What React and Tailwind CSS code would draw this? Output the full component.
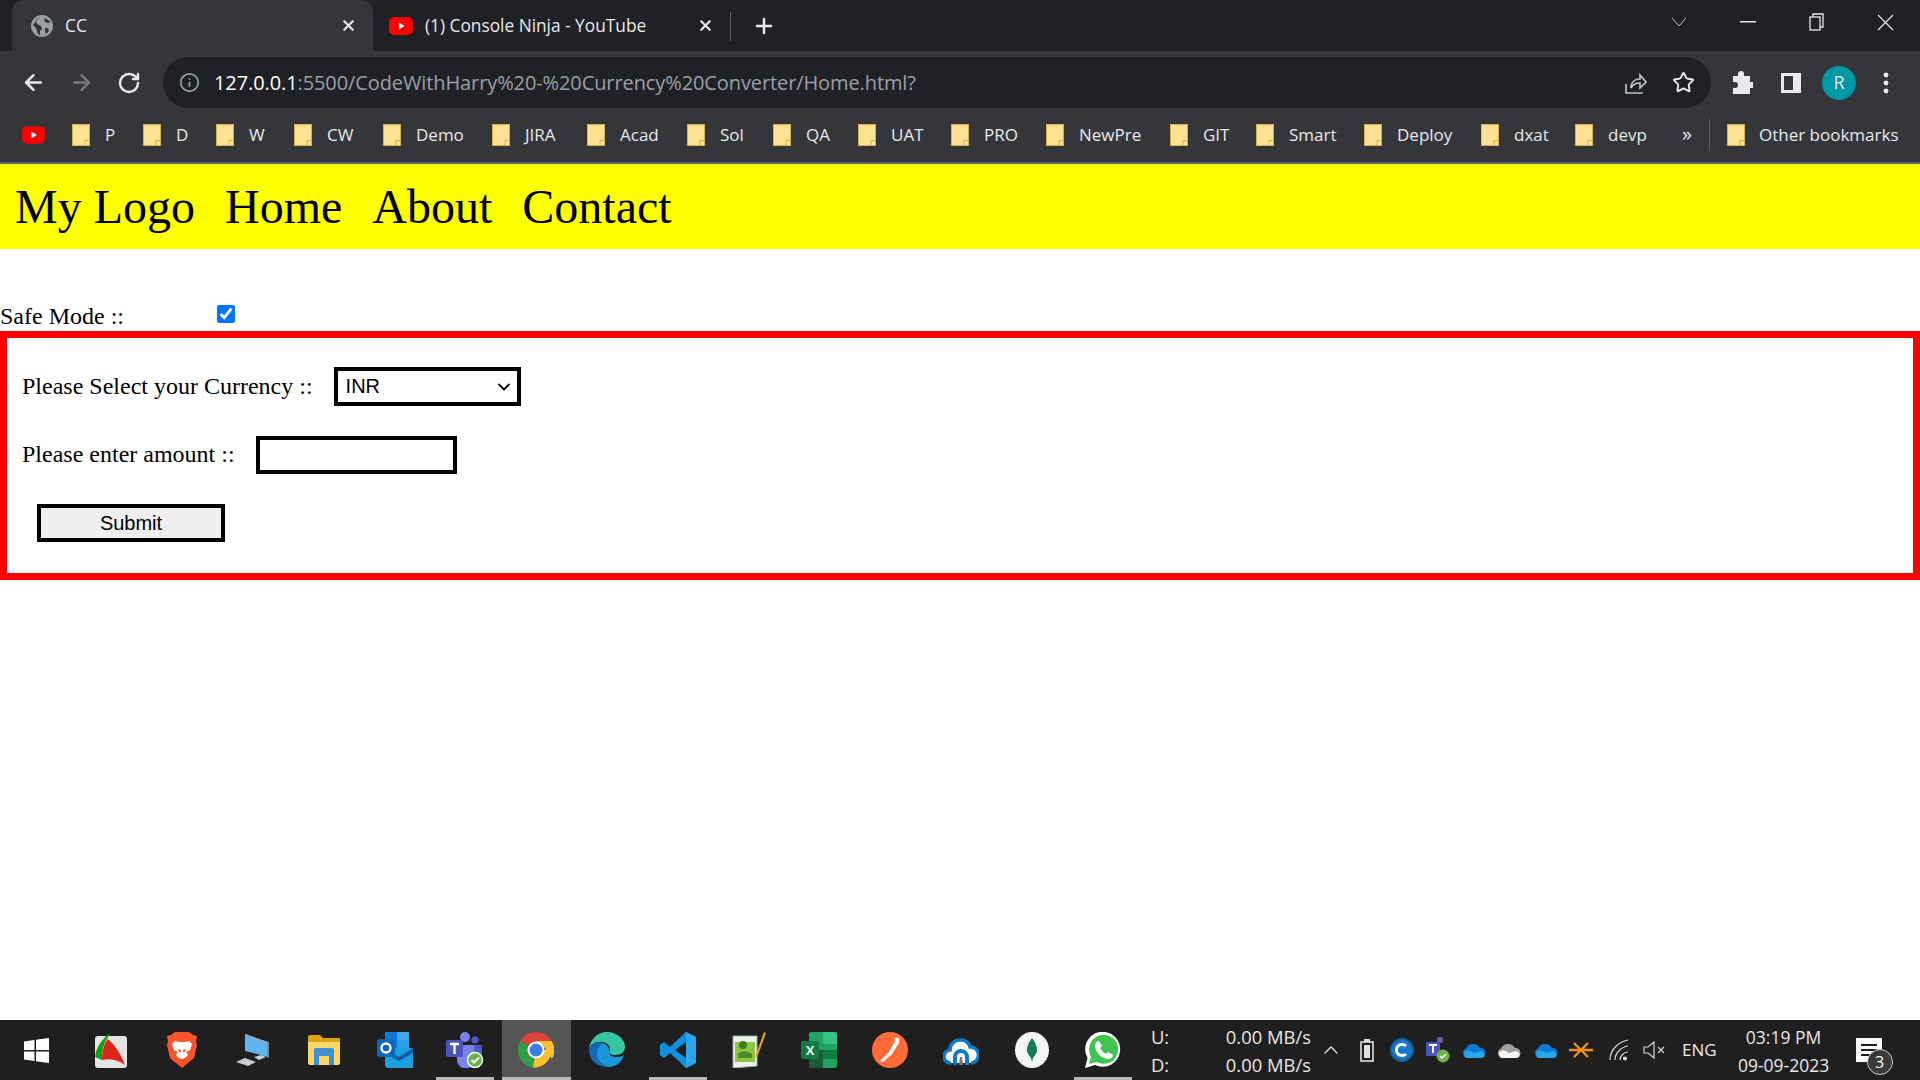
import { ArrowLeft, ArrowRight, RotateCw, Info, Star, Plus, X, ChevronUp, ChevronDown } from 'lucide-react';

const uiFont = "font-['Open_Sans',sans-serif]";

const bookmarks = [
  { name: 'P', w: 'w-[71px]' },
  { name: 'D', w: 'w-[73px]' },
  { name: 'W', w: 'w-[78px]' },
  { name: 'CW', w: 'w-[89px]' },
  { name: 'Demo', w: 'w-[109px]' },
  { name: 'JIRA', w: 'w-[95px]' },
  { name: 'Acad', w: 'w-[100px]' },
  { name: 'Sol', w: 'w-[86px]' },
  { name: 'QA', w: 'w-[85px]' },
  { name: 'UAT', w: 'w-[93px]' },
  { name: 'PRO', w: 'w-[95px]' },
  { name: 'NewPre', w: 'w-[124px]' },
  { name: 'GIT', w: 'w-[86px]' },
  { name: 'Smart', w: 'w-[108px]' },
  { name: 'Deploy', w: 'w-[117px]' },
  { name: 'dxat', w: 'w-[94px]' },
  { name: 'devp', w: 'w-[107px]' },
];

const Folder = () => (
  <svg width="18" height="22" viewBox="0 0 18 22" className="shrink-0">
    <rect x="0.5" y="0.5" width="17" height="21" fill="#fde293" stroke="#d9b04f" />
    <path d="M13 21.5v-5h4.500" fill="none" stroke="#d9b04f" />
  </svg>
);

const YouTubeIcon = ({ w = 24, h = 18 }) => (
  <svg width={w} height={h} viewBox="0 0 24 18" className="shrink-0">
    <rect width="24" height="18" rx="5" fill="#f00" />
    <path d="M10 5.500v7l5.500-3.500z" fill="#fff" />
  </svg>
);

const Globe = () => (
  <svg width="22" height="22" viewBox="0 0 22 22" className="shrink-0">
    <circle cx="11" cy="11" r="11" fill="#9aa0a6" />
    <path d="M9 1.500 5 5l1 4 4 2 1 3-2 2v4l-2-1-2-6-3-3M14 3l-1 3 3 2 4-1M14 13l3 0 1 3-3 3-1-2z" fill="#35363a" />
  </svg>
);

const Tab = ({ active, icon, title, className }) => (
  <div className={`flex items-center h-full ${className} ${active ? 'bg-[#35363a] rounded-t-[12px]' : ''}`}>
    {icon}
    <span className="flex-1 ml-[12px] text-[17.3px] text-[#e8eaed] truncate">{title}</span>
    <X size={17} strokeWidth={3} color="#e8eaed" className="shrink-0" />
  </div>
);

const TitleBar = () => (
  <div className="h-[51px] bg-[#202124] flex items-end pl-[12px] text-white shrink-0">
    <Tab active icon={<Globe />} title="CC" className="w-[361px] pl-[19px] pr-[16px]" />
    <Tab icon={<YouTubeIcon />} title="(1) Console Ninja - YouTube" className="w-[357px] pl-[16px] pr-[16px]" />
    <div className="w-px h-[29px] bg-[#5f6368] self-center mt-[2px]" />
    <Plus size={24} strokeWidth={2.5} color="#e8eaed" className="ml-[21px] self-center" />
    <div className="ml-auto flex items-center self-start h-[44px] text-[#e8eaed]">
      <svg width="16" height="10" viewBox="0 0 16 10" fill="none" stroke="#bdc1c6"><path d="m1 1 7 8 7-8" /></svg>
      <svg width="16" height="2" viewBox="0 0 16 2" className="ml-[53px]"><rect width="16" height="1.500" fill="#e8eaed" /></svg>
      <svg width="16" height="18" viewBox="0 0 16 18" fill="none" stroke="#e8eaed" strokeWidth="1.300" className="ml-[53px]">
        <rect x="1" y="4" width="10" height="13" />
        <path d="M4 4V1h10v13h-3" />
      </svg>
      <svg width="17" height="17" viewBox="0 0 17 17" fill="none" stroke="#e8eaed" strokeWidth="1.200" className="ml-[52px] mr-[26px]">
        <path d="m1 1 15 15M16 1 1 16" />
      </svg>
    </div>
  </div>
);

const ToolBar = () => (
  <div className="h-[57px] pt-[6px] bg-[#35363a] flex items-center shrink-0">
    <ArrowLeft size={25} strokeWidth={2.4} color="#e8eaed" className="ml-[21px]" />
    <ArrowRight size={25} strokeWidth={2.4} color="#76787c" className="ml-[23px]" />
    <RotateCw size={24} strokeWidth={2.4} color="#e8eaed" className="ml-[23px]" />
    <div className="ml-[22px] w-[1548px] h-[51px] rounded-full bg-[#202124] flex items-center pl-[16px] pr-[16px]">
      <Info size={21} strokeWidth={2} color="#9aa0a6" />
      <div className="ml-[14px] text-[20px] tracking-[-0.1px] whitespace-nowrap">
        <span className="text-white">127.0.0.1</span>
        <span className="text-[#9aa0a6]">:5500/CodeWithHarry%20-%20Currency%20Converter/Home.html?</span>
      </div>
      <svg width="23" height="24" viewBox="0 0 23 24" fill="none" stroke="#bdc1c6" strokeWidth="1.700" className="ml-auto">
        <path d="M2 13v9h17M7 17c0-6 4-9 9-9V4l6 7-6 6v-5c-4 0-7 1-9 5z" />
      </svg>
      <Star size={23} strokeWidth={2} color="#e8eaed" className="ml-[25px]" />
    </div>
    <svg width="22" height="24" viewBox="0 0 22 24" className="ml-[20px]" fill="#e8eaed">
      <path d="M2 5h5V3a3 3 0 0 1 6 0v2h6v6h2a3 3 0 0 1 0 6h-2v6H2v-6h2a3 3 0 0 0 0-6H2z" />
    </svg>
    <svg width="20" height="20" viewBox="0 0 20 20" className="ml-[28px]">
      <rect x="1.500" y="1.500" width="17" height="17" fill="none" stroke="#e8eaed" strokeWidth="3" />
      <rect x="12" y="2" width="6" height="16" fill="#e8eaed" />
    </svg>
    <div className="ml-[21px] w-[34px] h-[34px] rounded-full bg-[#0097a7] flex items-center justify-center text-[18px] text-[#e8eaed]">R</div>
    <svg width="6" height="22" viewBox="0 0 6 22" fill="#e8eaed" className="ml-[27px]">
      <circle cx="3" cy="3" r="2.400" />
      <circle cx="3" cy="11" r="2.400" />
      <circle cx="3" cy="19" r="2.400" />
    </svg>
  </div>
);

const BookmarksBar = () => (
  <div className="h-[56px] bg-[#35363a] border-b-2 border-[#5f6368] flex items-center text-[17px] text-[#e8eaed] shrink-0">
    <div className="ml-[22px] mr-[27px]"><YouTubeIcon w={23} h={18} /></div>
    {bookmarks.map((b) => (
      <div key={b.name} className={`flex items-center gap-[15px] ${b.w}`}>
        <Folder />
        <span className="pb-[1px]">{b.name}</span>
      </div>
    ))}
    <span className="text-[20px] pb-[2px]">»</span>
    <div className="w-px h-[32px] bg-[#5f6368] ml-[17px]" />
    <div className="ml-[17px] flex items-center gap-[14px]">
      <Folder />
      <span className="whitespace-nowrap pb-[1px]">Other bookmarks</span>
    </div>
  </div>
);

const PageContent = () => (
  <div className="flex-1 bg-white text-black font-['Liberation_Serif',serif] text-[24px] leading-[27px]">
    <nav className="h-[85px] bg-[#ffff00] flex items-center text-[48px]">
      {['My Logo', 'Home', 'About', 'Contact'].map((item) => (
        <span key={item} className="px-[15px]">{item}</span>
      ))}
    </nav>
    <div className="mt-[55px] h-[27px] flex items-start">
      <label className="w-[217px] -mt-[1px]">Safe Mode ::</label>
      <input type="checkbox" defaultChecked className="w-[18px] h-[18px] mt-[1px] accent-[#0075ff]" />
    </div>
    <div className="border-[7px] border-[#ff0000] pt-[29px] pr-[30px] pb-[31px] pl-[15px] flex flex-col gap-[30px]">
      <div className="flex items-center h-[39px]">
        <label className="pb-[1px]">Please Select your Currency ::</label>
        <div className="relative ml-[21px]">
          <select className="block w-[187px] h-[39px] appearance-none border-[4px] border-black bg-white text-[20px] font-['Liberation_Sans',sans-serif] pl-[8px]">
            <option>INR</option>
          </select>
          <ChevronDown size={20} strokeWidth={2.2} className="absolute right-[7px] top-[10px] pointer-events-none" />
        </div>
      </div>
      <div className="flex items-center h-[38px]">
        <label className="pb-[2px]">Please enter amount ::</label>
        <input type="text" className="ml-[21px] w-[201px] h-[38px] border-[4px] border-black bg-white" />
      </div>
      <button className="ml-[15px] w-[188px] h-[38px] border-[4px] border-black bg-[#efefef] text-[20px] font-['Liberation_Sans',sans-serif]">
        Submit
      </button>
    </div>
  </div>
);

// Taskbar app icons, drawn small by hand
const apps = [
  {
    key: 'foxit',
    icon: (
      <svg width="34" height="36" viewBox="0 0 34 36">
        <rect x="1" y="4" width="32" height="32" rx="3" fill="#e4e4e4" />
        <path d="M1 25C2 15 9 6 16 1l-3 6c-4 6-5 12-5 21z" fill="#12a012" />
        <path d="M8 28c0-9 2-17 6-21 7 6 13 15 17 26-7-5-14-7-23-5z" fill="#e0261c" />
      </svg>
    ),
  },
  {
    key: 'brave',
    icon: (
      <svg width="30" height="36" viewBox="0 0 30 36">
        <path d="M8 0h14l4 3 4 1-1 5 1 4-3 13-12 10L3 26 0 13l1-4-1-5 4-1z" fill="#fb542b" />
        <path d="M8 9l4 1h6l4-1 3 3-2 6-4 2 2 3-3 3-3 1-3-1-3-3 2-3-4-2-2-6z" fill="#fff" />
        <path d="M11 17l3 1v2h-2zM19 17l-3 1v2h2z" fill="#fb542b" />
      </svg>
    ),
  },
  {
    key: 'computer',
    icon: (
      <svg width="34" height="32" viewBox="0 0 34 32">
        <path d="M9 0l23 8v15L9 17z" fill="#5fb6ee" />
        <path d="M9 0l23 8-1 1L9 2z" fill="#9aa4ad" />
        <path d="M31 8h2v16l-2-1z" fill="#7f8a93" />
        <path d="M18 23l7-2 5 2-7 3zM0 28l9-4 11 4-8 4z" fill="#c9ced3" />
      </svg>
    ),
  },
  {
    key: 'folder',
    icon: (
      <svg width="32" height="30" viewBox="0 0 32 30">
        <path d="M0 2a2 2 0 0 1 2-2h10l3 3h17v5H0z" fill="#e0a20e" />
        <path d="M0 7h32v21a2 2 0 0 1-2 2H2a2 2 0 0 1-2-2z" fill="#fdd868" />
        <path d="M6 30V15a2 2 0 0 1 2-2h16a2 2 0 0 1 2 2v15h-5v-9H11v9z" fill="#3f8fd2" />
      </svg>
    ),
  },
  {
    key: 'outlook',
    icon: (
      <svg width="36" height="36" viewBox="0 0 36 36">
        <path d="M8 0h24v16H8z" fill="#0f78d4" />
        <path d="M20 0h12v8H20z" fill="#40a8ea" />
        <path d="M20 8h12v8H20z" fill="#26a0e4" />
        <path d="M8 16h28v20H10l-2-2z" fill="#1a9fe0" />
        <path d="M8 16l14 9 14-9v5l-14 8-14-8z" fill="#0c5aa6" />
        <rect y="7" width="18" height="18" rx="2" fill="#0f65b8" />
        <circle cx="9" cy="16" r="4.500" fill="none" stroke="#fff" strokeWidth="2.400" />
      </svg>
    ),
  },
  {
    key: 'teams',
    icon: (
      <svg width="38" height="36" viewBox="0 0 38 36">
        <circle cx="19" cy="5" r="5" fill="#7b83eb" />
        <circle cx="29" cy="8" r="3.600" fill="#5059c9" />
        <path d="M24 13h12v14h-12z" fill="#5059c9" />
        <path d="M11 13h17v15a8 8 0 0 1-17 0z" fill="#7b83eb" />
        <rect y="8" width="17" height="17" rx="2" fill="#4b53bc" />
        <path d="M4 12h9M8.500 12v10" stroke="#fff" strokeWidth="2.400" fill="none" />
        <circle cx="29" cy="28" r="7.500" fill="#6bb34a" stroke="#fff" strokeWidth="1.400" />
        <path d="m25.500 28 2.500 2.500 5-5" stroke="#fff" strokeWidth="2" fill="none" />
      </svg>
    ),
    under: true,
  },
  {
    key: 'chrome',
    icon: (
      <svg width="36" height="36" viewBox="0 0 36 36">
        <path d="M18 18 2.400 9A18 18 0 0 1 33.600 9z" fill="#db4437" />
        <path d="M18 18 2.400 9A18 18 0 0 0 15 35.800z" fill="#2f9e44" />
        <path d="M18 18H33.600 A18 18 0 0 1 15 35.800z" fill="#fbc02d" />
        <path d="M18 9h15.600A18 18 0 0 1 34 27L25 13z" fill="#fbc02d" />
        <circle cx="18" cy="18" r="8.500" fill="#fff" />
        <circle cx="18" cy="18" r="6.500" fill="#3b7de8" />
      </svg>
    ),
    active: true,
  },
  {
    key: 'edge',
    icon: (
      <svg width="36" height="36" viewBox="0 0 36 36">
        <path d="M0 17C1 7 9 0 18 0c10 0 18 7 18 15 0 5-4 8-9 8-4 0-7-1-7-3 2-2 1-7-3-9C10 8 2 11 0 17z" fill="#37c6a2" />
        <path d="M0 17c2-6 10-8 14-6-6 3-8 10-5 16 2 4 6 7 11 8-11 1-20-6-20-18z" fill="#1068b8" />
        <path d="M20 20c0 3 4 5 8 5 3 0 6-1 7-2-2 8-9 12-15 12-5-1-9-4-11-8-3-6-1-13 5-16 5 2 7 6 6 9z" fill="#1b96d8" />
      </svg>
    ),
  },
  {
    key: 'vscode',
    icon: (
      <svg width="36" height="36" viewBox="0 0 36 36">
        <path d="M26 0 36 5v26l-10 5L10 21l-6 5-4-3v-10l4-3 6 5z" fill="#0f8fe0" />
        <path d="M26 0 36 5v26l-10 5z" fill="#2aa6ee" />
        <path d="M26 10 15 18l11 8z" fill="#1f1f1f" />
      </svg>
    ),
    under: true,
  },
  {
    key: 'notepad',
    icon: (
      <svg width="34" height="36" viewBox="0 0 34 36">
        <path d="M1 4h24v30l-24 2z" fill="#eef2e8" stroke="#99aaaa" />
        <path d="M3 10h20v20H3z" fill="#8cc63f" />
        <circle cx="11" cy="13" r="4" fill="#3f7d20" />
        <path d="M6 22c4-4 10-3 14 0v4H6z" fill="#4c8c26" />
        <path d="M32 0 24 22l-1 4 3-3 8-22z" fill="#e0a020" />
      </svg>
    ),
  },
  {
    key: 'excel',
    icon: (
      <svg width="36" height="36" viewBox="0 0 36 36">
        <rect x="8" width="28" height="36" rx="2" fill="#21a366" />
        <path d="M22 0h12a2 2 0 0 1 2 2v10H22z" fill="#33c481" />
        <path d="M8 18h14v18H10a2 2 0 0 1-2-2z" fill="#185c37" />
        <path d="M22 18h14v9H22z" fill="#107c41" />
        <rect y="9" width="18" height="18" rx="2" fill="#107c41" />
        <text x="9" y="23" textAnchor="middle" fontSize="13" fontWeight="700" fill="#fff" fontFamily="Liberation Sans">X</text>
      </svg>
    ),
  },
  {
    key: 'postman',
    icon: (
      <svg width="36" height="36" viewBox="0 0 36 36">
        <circle cx="18" cy="18" r="18" fill="#ff6c37" />
        <path d="M8 29l9-9 3 2-9 8zM17 20l5-9c2-2 4-2 5 0l-7 11z" fill="#fff" />
        <circle cx="25" cy="8" r="2.500" fill="#fff" />
      </svg>
    ),
  },
  {
    key: 'cloud',
    icon: (
      <svg width="36" height="30" viewBox="0 0 36 30">
        <path d="M8 28a6.500 6.500 0 0 1-1-13 10 10 0 0 1 10-10 9 9 0 0 1 10 7 8 8 0 0 1 1 16" fill="#fff" stroke="#0f7ac8" strokeWidth="3.500" />
        <path d="M10 30V22a8 8 0 0 1 16 0v8h-4v-8a4 4 0 0 0-8 0v8z" fill="#0f7ac8" />
        <path d="M16 30l1-8h2l1 8z" fill="#777777" />
      </svg>
    ),
  },
  {
    key: 'mongo',
    icon: (
      <svg width="34" height="36" viewBox="0 0 34 36">
        <ellipse cx="17" cy="18" rx="17" ry="18" fill="#f4f4f2" />
        <path d="M17 6c3 4 5 8 5 12 0 4-3 6-4 8l-1 4-1-4c-1-2-4-4-4-8 0-4 2-8 5-12z" fill="#13795b" />
      </svg>
    ),
  },
  {
    key: 'whatsapp',
    icon: (
      <svg width="36" height="36" viewBox="0 0 36 36">
        <path d="M0 36l2.500-10A17.500 17.500 0 1 1 10 33z" fill="#fff" />
        <path d="M4 32l2-7.500A14.500 14.500 0 1 1 11.500 30z" fill="#3ec44f" />
        <path d="M13 9c-1 0-3 2-3 5 0 6 7 13 13 13 3 0 5-2 5-4l-5-3-2 2c-2-1-5-4-6-6l2-2-3-5z" fill="#fff" />
      </svg>
    ),
    under: true,
  },
];

const TaskbarApp = ({ icon, active, under }) => (
  <div className={`relative h-full flex items-center justify-center ${active ? 'bg-[#555555] w-[69px] mx-[1px]' : 'w-[58px] mx-[6.4px]'}`}>
    {icon}
    {(under || active) && <div className="absolute left-0 right-0 bottom-0 h-[3px] bg-[#b8b8b8]" />}
  </div>
);

const TrayCloud = ({ color, top }) => (
  <svg width="24" height="16" viewBox="0 0 24 16">
    <path d="M5 16a5 5 0 0 1-1-9.500A8 8 0 0 1 18 6a5 5 0 0 1 1 10z" fill={color} />
    <path d="M2 10c5-3 7-1 10 1l7-2c3 1 4 3 3 6l-3 1H5c-2 0-3-2-3-6z" fill={top} />
  </svg>
);

const Taskbar = () => (
  <div className={`h-[60px] bg-[#1f1f1f] flex items-center text-[#e8e8e8] shrink-0 ${uiFont}`}>
    <svg width="25" height="25" viewBox="0 0 25 25" fill="#fff" className="ml-[24px] mr-[27px] shrink-0">
      <path d="M0 3.500 10.500 2v10H0zM12 1.800 25 0v12H12zM0 13.500h10.500V23L0 21.500zM12 13.500h13V25l-13-1.800z" />
    </svg>
    <div className="flex items-center h-full">
      {apps.map((a) => (
        <TaskbarApp key={a.key} icon={a.icon} active={a.active} under={a.under} />
      ))}
    </div>
    <div className="ml-[13px] w-[160px] text-[18.4px] leading-[28px] pt-[2px]">
      <div className="flex justify-between"><span>U:</span><span>0.00 MB/s</span></div>
      <div className="flex justify-between"><span>D:</span><span>0.00 MB/s</span></div>
    </div>
    <ChevronUp size={24} strokeWidth={1.3} className="ml-[8px]" />
    <svg width="14" height="24" viewBox="0 0 14 24" fill="none" stroke="#e0e0e0" strokeWidth="1.600" className="ml-[17px]">
      <rect x="1" y="4" width="12" height="19" />
      <rect x="4" y="7" width="6" height="13" fill="#e0e0e0" stroke="none" />
      <rect x="4" y="1" width="6" height="3" fill="#e0e0e0" stroke="none" />
    </svg>
    <div className="ml-[16px] w-[24px] h-[24px] rounded-full bg-[#1878c8] border-[2px] border-[#10609f] flex items-center justify-center">
      <div className="w-[14px] h-[14px] rounded-full border-[3px] border-white border-r-transparent" />
    </div>
    <svg width="24" height="28" viewBox="0 0 24 28" className="ml-[12px]">
      <circle cx="14" cy="4" r="3" fill="#6264a7" />
      <rect y="6" width="14" height="14" rx="1" fill="#4b53bc" />
      <path d="M3 9h8M7 9v8" stroke="#fff" strokeWidth="2" />
      <circle cx="17" cy="20" r="6.500" fill="#6bb34a" />
      <path d="m14 20 2 2 4-4" stroke="#fff" strokeWidth="1.600" fill="none" />
    </svg>
    <div className="ml-[12px]"><TrayCloud color="#0f78d4" top="#28a8ea" /></div>
    <div className="ml-[11px]"><TrayCloud color="#a0a0a0" top="#f4f4f4" /></div>
    <div className="ml-[13px]"><TrayCloud color="#0f78d4" top="#28a8ea" /></div>
    <svg width="26" height="20" viewBox="0 0 26 20" stroke="#f09020" strokeWidth="2.400" className="ml-[10px]">
      <path d="M1 10h24M6 3l14 14M20 3 6 17" />
    </svg>
    <svg width="20" height="22" viewBox="0 0 20 22" fill="none" stroke="#d8d8d8" strokeWidth="1.200" className="ml-[15px]">
      <path d="M1 21C1 11 9 3 19 1M6 21c0-7 6-13 13-14M11 21c0-4 4-8 8-8" />
      <circle cx="16" cy="19.500" r="1.500" fill="#d8d8d8" />
    </svg>
    <svg width="22" height="20" viewBox="0 0 22 20" fill="none" stroke="#d8d8d8" strokeWidth="1.200" className="ml-[14px]">
      <path d="M1 7h4l6-5v16l-6-5H1zM15 7l6 6M21 7l-6 6" />
    </svg>
    <span className="ml-[17px] text-[17px]">ENG</span>
    <div className="ml-[20px] w-[94px] text-[17.5px] leading-[28px] pt-[2px] text-center whitespace-nowrap flex flex-col items-center">
      <span>03:19 PM</span>
      <span>09-09-2023</span>
    </div>
    <div className="relative ml-[25px] w-[26px] h-[24px] bg-white">
      <div className="mx-[5px] mt-[6px] h-[2px] bg-[#1f1f1f]" />
      <div className="mx-[5px] mt-[3px] h-[2px] bg-[#1f1f1f]" />
      <div className="mx-[5px] mt-[3px] h-[2px] bg-[#1f1f1f]" />
      <div className="absolute left-[11px] top-[11px] w-[26px] h-[26px] rounded-full bg-[#3a3a3a] border border-[#cfcfcf] flex items-center justify-center text-[16px] text-white">3</div>
    </div>
  </div>
);

export default function App() {
  return (
    <div className="w-[1920px] h-[1080px] flex flex-col overflow-hidden">
      <div className={uiFont}>
        <TitleBar />
        <ToolBar />
        <BookmarksBar />
      </div>
      <PageContent />
      <Taskbar />
    </div>
  );
}
